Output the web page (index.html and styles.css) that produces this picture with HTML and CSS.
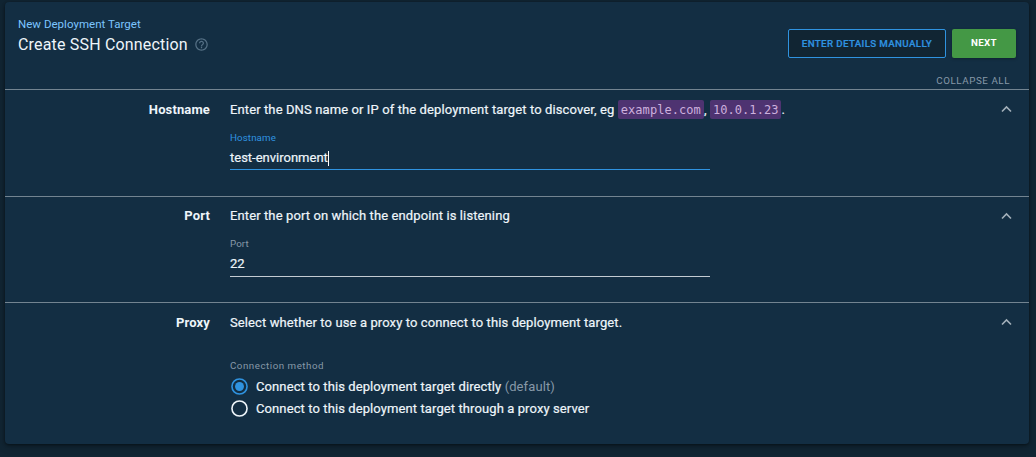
FILE: index.html
```html
<!DOCTYPE html>
<html lang="en">
<head>
<meta charset="utf-8">
<title>Create SSH Connection</title>
<link rel="stylesheet" href="styles.css">
</head>
<body>
<main class="card">
  <header class="header">
    <div class="heading">
      <a class="breadcrumb">New Deployment Target</a>
      <div class="title-row">
        <h1 class="title">Create SSH Connection</h1>
        <svg class="help" viewBox="0 0 24 24"><path d="M11 18h2v-2h-2v2zm1-16C6.48 2 2 6.48 2 12s4.48 10 10 10 10-4.48 10-10S17.520 2 12 2zm0 18c-4.410 0-8-3.590-8-8s3.590-8 8-8 8 3.590 8 8-3.590 8-8 8zm0-14c-2.210 0-4 1.790-4 4h2c0-1.100.9-2 2-2s2 .9 2 2c0 2-3 1.750-3 5h2c0-2.250 3-2.500 3-5 0-2.210-1.790-4-4-4z"/></svg>
      </div>
    </div>
    <div class="actions">
      <button class="btn btn-outline">Enter details manually</button>
      <button class="btn btn-primary">Next</button>
    </div>
  </header>
  <div class="toolbar"><span class="collapse">Collapse all</span></div>

  <section class="section section-host">
    <h2 class="name">Hostname</h2>
    <div class="content">
      <p class="summary">Enter the DNS name or IP of the deployment target to discover, eg <code class="code">example.com</code>, <code class="code">10.0.1.23</code>.</p>
      <div class="field field-active">
        <span class="label">Hostname</span>
        <div class="value">test-environment<i class="caret"></i></div>
      </div>
    </div>
    <svg class="chevron" viewBox="0 0 18 18"><path d="M5 11.500L9.500 7l4.500 4.500"/></svg>
  </section>

  <section class="section section-port">
    <h2 class="name">Port</h2>
    <div class="content">
      <p class="summary">Enter the port on which the endpoint is listening</p>
      <div class="field">
        <span class="label">Port</span>
        <div class="value">22</div>
      </div>
    </div>
    <svg class="chevron" viewBox="0 0 18 18"><path d="M5 11.500L9.500 7l4.500 4.500"/></svg>
  </section>

  <section class="section section-proxy">
    <h2 class="name">Proxy</h2>
    <div class="content">
      <p class="summary">Select whether to use a proxy to connect to this deployment target.</p>
      <div class="radio-group">
        <span class="label label-wide">Connection method</span>
        <div class="radio"><svg class="dot dot-on" viewBox="0 0 16 16"><circle class="ring" cx="8" cy="8" r="7.100"/><circle class="core" cx="8" cy="8" r="4.200"/></svg><span>Connect to this deployment target directly <span class="muted">(default)</span></span></div>
        <div class="radio"><svg class="dot" viewBox="0 0 16 16"><circle class="ring" cx="8" cy="8" r="7.100"/></svg><span>Connect to this deployment target through a proxy server</span></div>
      </div>
    </div>
    <svg class="chevron" viewBox="0 0 18 18"><path d="M5 11.500L9.500 7l4.500 4.500"/></svg>
  </section>
</main>
</body>
</html>
```
FILE: styles.css
```css
* { box-sizing: border-box; }
body {
  margin: 0;
  padding: 2px 7px 13px 5px;
  height: 457px;
  overflow: hidden;
  background: #112533;
  color: #eef5fa;
  font: 400 13px/20px Roboto, "Noto Sans", sans-serif;
}
.card {
  height: 442px;
  background: #132e43;
  border-radius: 4px;
  box-shadow: 0 1px 3px rgba(0, 0, 0, .45), 0 2px 8px rgba(0, 0, 0, .25);
}
.header {
  display: flex;
  justify-content: space-between;
  height: 68px;
  padding: 14px 13px 0;
}
.breadcrumb { display: block; font-size: 11.5px; line-height: 17px; letter-spacing: .03px; color: #7cc4ff; }
.title-row { display: flex; align-items: center; gap: 6px; height: 24px; }
.title {
  margin: 0;
  font-size: 16px;
  font-weight: 400;
  line-height: 24px;
  letter-spacing: .18px;
  white-space: nowrap;
}
.help { width: 15px; height: 15px; margin-top: -2px; fill: #557085; }
.actions { display: flex; gap: 6px; padding-top: 13px; }
.btn {
  height: 29px;
  padding: 0;
  border-radius: 2px;
  font: 500 9.75px/27px Roboto, sans-serif;
  letter-spacing: .35px;
  text-transform: uppercase;
  text-align: center;
  white-space: nowrap;
}
.btn-outline { width: 158px; border: 1px solid #2f93e0; background: #112533; color: #2f93e0; -webkit-text-stroke: .2px; }
.btn-primary {
  width: 64px;
  border: 0;
  padding-bottom: 2px;
  background: #449845;
  color: #fff;
  font-weight: 700;
  box-shadow: 0 1px 3px rgba(0, 0, 0, .3);
}
.toolbar { height: 19px; padding-right: 19px; text-align: right; }
.collapse {
  display: block;
  font-size: 9.75px;
  line-height: 21px;
  letter-spacing: .58px;
  text-transform: uppercase;
  color: #8799a8;
}
.section {
  display: grid;
  grid-template-columns: 205px 1fr 18px;
  column-gap: 20px;
  padding: 10px 14px 0 0;
  border-top: 1px solid #738491;
}
.section-host { height: 107px; }
.section-port { height: 106px; padding-top: 9px; }
.section-proxy { height: 140px; }
.name {
  margin: 0;
  font-size: 13px;
  font-weight: 700;
  line-height: 20px;
  letter-spacing: .13px;
  text-align: right;
}
.summary { margin: 0; height: 20px; letter-spacing: .11px; white-space: nowrap; }
.summary, .value, .radio { -webkit-text-stroke: .2px; }
.code {
  display: inline-block;
  height: 19px;
  padding: 0 3px;
  border-radius: 2px;
  background: #4e3371;
  color: #cdb0de;
  font: 12px/20px "DejaVu Sans Mono", monospace;
  letter-spacing: .06px;
  -webkit-text-stroke: 0;
}
.field { width: 480px; height: 50px; border-bottom: 1px solid #c3cbd2; }
.label { display: block; font-size: 9.75px; line-height: 12px; letter-spacing: .1px; color: #8799a8; }
.field .label { height: 30px; padding-top: 12px; }
.section-port .field { height: 51px; }
.value { display: flex; align-items: center; height: 16px; }
.field-active { border-color: #2f93e0; }
.field-active .label { color: #2f93e0; }
.caret { width: 1px; height: 15px; background: #fff; }
.radio-group { padding-top: 25px; }
.label-wide { height: 18px; padding-top: 2px; letter-spacing: .52px; }
.radio {
  display: flex;
  align-items: center;
  gap: 8px;
  height: 22px;
  padding-left: 1px;
  letter-spacing: .1px;
  white-space: nowrap;
}
.dot { width: 17px; height: 17px; margin-top: -1px; fill: none; color: #eef5fa; }
.dot-on { color: #2f93e0; }
.ring { stroke: currentColor; stroke-width: 1.5; }
.core { fill: currentColor; }
.muted { color: #8799a8; -webkit-text-stroke: 0; }
.chevron { width: 18px; height: 18px; fill: none; stroke: #a3b0ba; stroke-width: 1.6; }
.section-port .chevron { margin-top: 1px; }
```
